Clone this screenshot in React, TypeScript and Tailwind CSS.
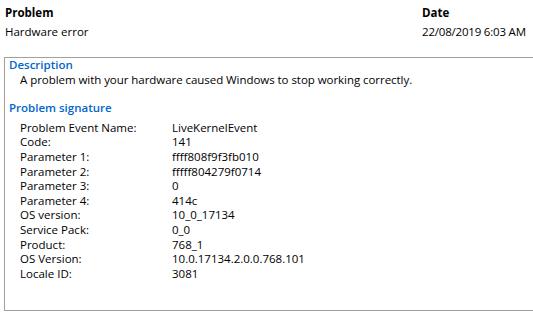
const rows: [string, string][] = [
  ['Problem Event Name:', 'LiveKernelEvent'],
  ['Code:', '141'],
  ['Parameter 1:', 'ffff808f9f3fb010'],
  ['Parameter 2:', 'fffff804279f0714'],
  ['Parameter 3:', '0'],
  ['Parameter 4:', '414c'],
  ['OS version:', '10_0_17134'],
  ['Service Pack:', '0_0'],
  ['Product:', '768_1'],
  ['OS Version:', '10.0.17134.2.0.0.768.101'],
  ['Locale ID:', '3081'],
];

export default function App() {
  return (
    <div
      className="w-[533px] h-[319px] bg-white text-black text-[11.5px] leading-[15px] overflow-hidden"
      style={{ fontFamily: '"Open Sans", "Noto Sans", sans-serif' }}
    >
      <div className="flex pt-[5px]">
        <div className="pl-[5px] w-[422px]">
          <p className="font-bold">Problem</p>
          <p className="mt-[4px]">Hardware error</p>
        </div>
        <div>
          <p className="font-bold">Date</p>
          <p className="mt-[4px] tracking-[-0.2px]">22/08/2019 6:03 AM</p>
        </div>
      </div>

      <div className="ml-[4px] mt-[18px] border-l border-t border-b border-[#a0a0a0] pb-[29px] leading-[14.6px]">
        <p className="pl-[4px] font-semibold text-[#0066cc]">Description</p>
        <p className="pl-[15px] tracking-[-0.05px]">A problem with your hardware caused Windows to stop working correctly.</p>

        <p className="pl-[4px] mt-[14px] font-semibold text-[#0066cc]">Problem signature</p>
        <div className="mt-[5px] pl-[15px]">
          {rows.map(([label, value]) => (
            <div key={label} className="flex">
              <span className="w-[152px] shrink-0">{label}</span>
              <span>{value}</span>
            </div>
          ))}
        </div>
      </div>
    </div>
  );
}
